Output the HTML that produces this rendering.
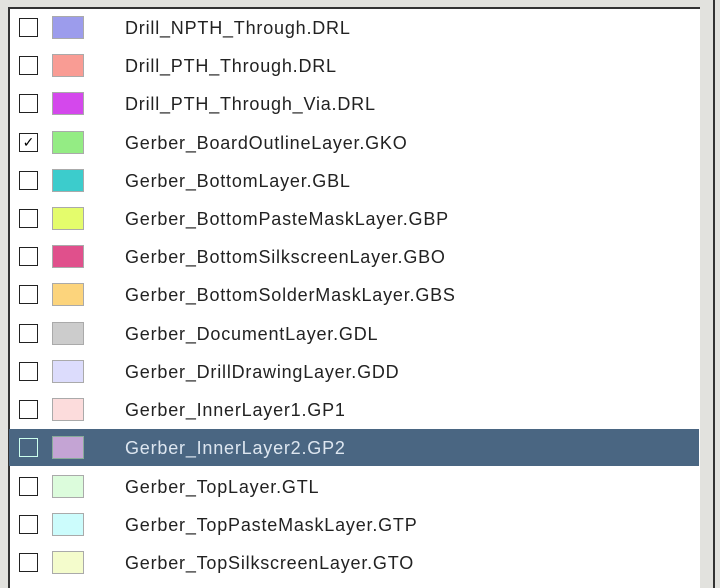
<!DOCTYPE html>
<html style="overflow:hidden;height:588px"><head><style>
body{margin:0;width:720px;height:588px;background:#e2e2de;position:relative;overflow:hidden;font-family:"Liberation Sans",sans-serif}
#p{position:absolute;left:8px;top:7px;width:692px;height:581px;background:#fff;border-left:2px solid #333;border-top:2px solid #333;box-sizing:border-box}
#r{position:absolute;left:713px;top:0;width:2px;height:588px;background:#333}
.row{position:absolute;left:9px;width:690px;height:37px}
.sel{background:#4a6682;color:#dde6f0}
.cb{position:absolute;left:10px;top:9px;width:19px;height:19px;border:1.5px solid #222;box-sizing:border-box;background:#fff;font-size:14px;line-height:16px;text-align:center}
.sel .cb{background:#4a6682;border-color:#cfe;}
.sw{position:absolute;left:43px;top:7px;width:32px;height:23px;border:1px solid #aaa;box-sizing:border-box}
.t{position:absolute;left:116px;top:9px;font-size:18px;letter-spacing:0.8px;color:#222}
.sel .t{color:#dde6f0}
</style></head><body>
<div id="p"></div><div id="r"></div>
<div class="row" style="top:9px"><div class="cb"></div><div class="sw" style="background:#9c9cec"></div><div class="t">Drill_NPTH_Through.DRL</div></div>
<div class="row" style="top:47px"><div class="cb"></div><div class="sw" style="background:#f99c94"></div><div class="t">Drill_PTH_Through.DRL</div></div>
<div class="row" style="top:85px"><div class="cb"></div><div class="sw" style="background:#d448ec"></div><div class="t">Drill_PTH_Through_Via.DRL</div></div>
<div class="row" style="top:124px"><div class="cb">✓</div><div class="sw" style="background:#94ec84"></div><div class="t">Gerber_BoardOutlineLayer.GKO</div></div>
<div class="row" style="top:162px"><div class="cb"></div><div class="sw" style="background:#3ccccc"></div><div class="t">Gerber_BottomLayer.GBL</div></div>
<div class="row" style="top:200px"><div class="cb"></div><div class="sw" style="background:#e4fc6c"></div><div class="t">Gerber_BottomPasteMaskLayer.GBP</div></div>
<div class="row" style="top:238px"><div class="cb"></div><div class="sw" style="background:#e0508c"></div><div class="t">Gerber_BottomSilkscreenLayer.GBO</div></div>
<div class="row" style="top:276px"><div class="cb"></div><div class="sw" style="background:#fcd47c"></div><div class="t">Gerber_BottomSolderMaskLayer.GBS</div></div>
<div class="row" style="top:315px"><div class="cb"></div><div class="sw" style="background:#cccccc"></div><div class="t">Gerber_DocumentLayer.GDL</div></div>
<div class="row" style="top:353px"><div class="cb"></div><div class="sw" style="background:#dcdcfc"></div><div class="t">Gerber_DrillDrawingLayer.GDD</div></div>
<div class="row" style="top:391px"><div class="cb"></div><div class="sw" style="background:#fcdcdc"></div><div class="t">Gerber_InnerLayer1.GP1</div></div>
<div class="row sel" style="top:429px"><div class="cb"></div><div class="sw" style="background:#c4a4d4;border-color:#8a9"></div><div class="t">Gerber_InnerLayer2.GP2</div></div>
<div class="row" style="top:468px"><div class="cb"></div><div class="sw" style="background:#dcfcdc"></div><div class="t">Gerber_TopLayer.GTL</div></div>
<div class="row" style="top:506px"><div class="cb"></div><div class="sw" style="background:#ccfcfc"></div><div class="t">Gerber_TopPasteMaskLayer.GTP</div></div>
<div class="row" style="top:544px"><div class="cb"></div><div class="sw" style="background:#f4fccc"></div><div class="t">Gerber_TopSilkscreenLayer.GTO</div></div>
</body></html>
